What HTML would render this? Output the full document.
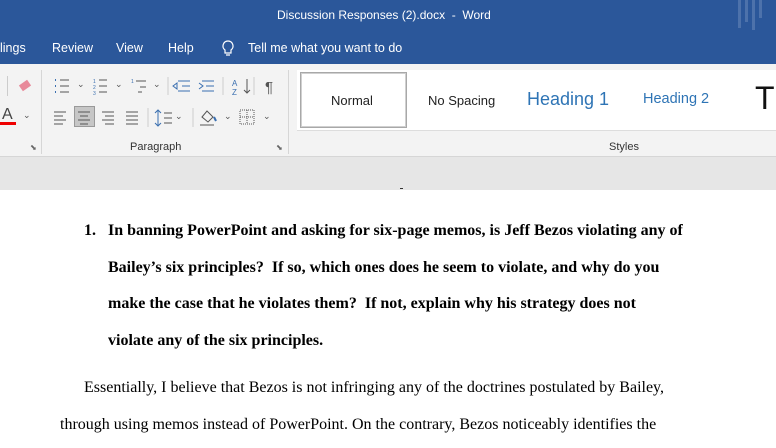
<!DOCTYPE html><html><head><style>
body{margin:0;width:776px;height:448px;overflow:hidden;position:relative;background:#fff;font-family:"Liberation Sans",sans-serif}
.a{position:absolute}
.t{white-space:nowrap}
.s{font-family:"Liberation Serif",serif;font-size:16px;color:#000;position:absolute;white-space:nowrap}
.b{font-weight:bold}
</style></head><body>
<div class="a" style="left:0;top:0;width:776px;height:64px;background:#2b579a"></div>
<div class="a t" style="left:277px;top:8px;color:#fff;font-size:12px">Discussion Responses (2).docx&nbsp; - &nbsp;Word</div>
<div class="a" style="left:738px;top:0;width:3px;height:28px;background:#4d72ab"></div>
<div class="a" style="left:745px;top:0;width:3px;height:22px;background:#4d72ab"></div>
<div class="a" style="left:752px;top:0;width:3px;height:30px;background:#4d72ab"></div>
<div class="a" style="left:759px;top:0;width:3px;height:18px;background:#4d72ab"></div>
<div class="a t" style="left:0;top:41px;color:#fff;font-size:12.5px">lings</div>
<div class="a t" style="left:52px;top:41px;color:#fff;font-size:12.5px">Review</div>
<div class="a t" style="left:116px;top:41px;color:#fff;font-size:12.5px">View</div>
<div class="a t" style="left:168px;top:41px;color:#fff;font-size:12.5px">Help</div>
<svg class="a" style="left:221px;top:40px" width="14" height="17"><path d="M7 1a5 5 0 0 0-3 9v3h6v-3a5 5 0 0 0-3-9zM5 15h4" stroke="#fff" fill="none" stroke-width="1.2"/></svg>
<div class="a t" style="left:248px;top:41px;color:#fff;font-size:12.5px">Tell me what you want to do</div>
<div class="a" style="left:0;top:64px;width:776px;height:93px;background:#f3f3f3"></div>
<div class="a" style="left:41px;top:70px;width:1px;height:84px;background:#d6d6d6"></div>
<div class="a" style="left:288px;top:70px;width:1px;height:84px;background:#d6d6d6"></div>
<div class="a" style="left:7px;top:76px;width:1px;height:20px;background:#ccc"></div>
<div class="a" style="left:20px;top:82px;width:10px;height:7px;background:#e88a9a;transform:rotate(-35deg)"></div>
<div class="a t" style="left:2px;top:106px;font-size:16px;color:#444">A</div>
<div class="a" style="left:0;top:122px;width:16px;height:3px;background:#e00"></div>
<div class="a t" style="left:23px;top:110px;font-size:9px;color:#555">⌄</div>
<svg class="a" style="left:52px;top:76px" width="240" height="20" stroke="#555" fill="none">
<path d="M3 4h1M3 10h1M3 16h1" stroke="#3a6fb0" stroke-width="2"/>
<path d="M8 4h9M8 10h9M8 16h9"/>
<path d="M47 4h8M47 10h8M47 16h8"/><text x="41" y="7" font-size="5" fill="#3a6fb0" stroke="none">1</text><text x="41" y="13" font-size="5" fill="#3a6fb0" stroke="none">2</text><text x="41" y="19" font-size="5" fill="#3a6fb0" stroke="none">3</text>
<path d="M84 5h10M88 11h6M86 16h4"/><text x="79" y="7" font-size="5" fill="#3a6fb0" stroke="none">1</text>
<path d="M116 1v18M171 1v18M202 1v18" stroke="#ccc"/>
<path d="M126 5h12M130 10h8M126 15h12M121 10l4-3v6z" stroke="#3a6fb0"/>
<path d="M150 5h12M154 10h8M150 15h12M147 7l4 3-4 3" stroke="#3a6fb0"/>
<path d="M195 3v14M192 14l3 3 3-3"/>
<text x="180" y="10" font-size="8" fill="#3a6fb0" stroke="none">A</text><text x="180" y="19" font-size="8" fill="#3a6fb0" stroke="none">Z</text>
<text x="213" y="16" font-size="15" fill="#555" stroke="none">¶</text>
</svg>
<div class="a t" style="left:77px;top:79px;font-size:9px;color:#555">⌄</div>
<div class="a t" style="left:115px;top:79px;font-size:9px;color:#555">⌄</div>
<div class="a t" style="left:153px;top:79px;font-size:9px;color:#555">⌄</div>
<div class="a" style="left:74px;top:106px;width:21px;height:21px;background:#c6c6c6;border:1px solid #999;box-sizing:border-box"></div>
<svg class="a" style="left:52px;top:108px" width="240" height="20" stroke="#555" fill="none">
<path d="M2 4h12M2 8h9M2 12h12M2 16h9"/>
<path d="M26 4h12M28 8h8M26 12h12M28 16h8"/>
<path d="M50 4h12M53 8h9M50 12h12M53 16h9"/>
<path d="M74 4h12M74 8h12M74 12h12M74 16h12"/>
<path d="M96 0v19M141 0v19" stroke="#ccc"/>
<path d="M106 2v16M103 5l3-3 3 3M103 15l3 3 3-3" stroke="#3a6fb0"/><path d="M112 5h8M112 10h8M112 15h8"/>
<path d="M150 9l5-6 6 6-5 5zM148 17h14" /><path d="M162 9l2 4" stroke="#3a6fb0" stroke-width="2"/>
<path d="M188 2h14v14h-14z" stroke-dasharray="1 1"/><path d="M195 2v14M188 9h14" stroke-dasharray="1 1"/>
</svg>
<div class="a t" style="left:175px;top:111px;font-size:9px;color:#555">⌄</div>
<div class="a t" style="left:224px;top:111px;font-size:9px;color:#555">⌄</div>
<div class="a t" style="left:263px;top:111px;font-size:9px;color:#555">⌄</div>
<div class="a t" style="left:130px;top:141px;font-size:11px;color:#333">Paragraph</div>
<div class="a t" style="left:30px;top:143px;font-size:8px;color:#666">⬊</div>
<div class="a t" style="left:276px;top:143px;font-size:8px;color:#666">⬊</div>
<div class="a" style="left:297px;top:70px;width:479px;height:60px;background:#fff;border-bottom:1px solid #ddd"></div>
<div class="a" style="left:300px;top:72px;width:107px;height:56px;border:1px solid #a8a8a8;box-shadow:inset 0 0 0 1px #d0d0d0;box-sizing:border-box"></div>
<div class="a t" style="left:331px;top:93px;font-size:13px;color:#222">Normal</div>
<div class="a t" style="left:428px;top:93px;font-size:13px;color:#222">No Spacing</div>
<div class="a t" style="left:527px;top:89px;font-size:18px;color:#2e74b5">Heading 1</div>
<div class="a t" style="left:643px;top:91px;font-size:14.5px;color:#2e74b5">Heading 2</div>
<div class="a t" style="left:755px;top:80px;font-size:32px;color:#111">T</div>
<div class="a t" style="left:609px;top:141px;font-size:11px;color:#333">Styles</div>
<div class="a" style="left:0;top:156px;width:776px;height:1px;background:#d6d6d6"></div>
<div class="a" style="left:0;top:157px;width:776px;height:33px;background:#e6e6e6"></div>
<div class="a" style="left:400px;top:188px;width:3px;height:1px;background:#333"></div>
<div class="s b" style="left:84px;top:222px">1.</div>
<div class="s b" style="left:108px;top:222px">In banning PowerPoint and asking for six-page memos, is Jeff Bezos violating any of</div>
<div class="s b" style="left:108px;top:259px">Bailey’s six principles?&nbsp; If so, which ones does he seem to violate, and why do you</div>
<div class="s b" style="left:108px;top:295px">make the case that he violates them?&nbsp; If not, explain why his strategy does not</div>
<div class="s b" style="left:108px;top:332px">violate any of the six principles.</div>
<div class="s" style="left:84px;top:379px">Essentially, I believe that Bezos is not infringing any of the doctrines postulated by Bailey,</div>
<div class="s" style="left:60px;top:416px">through using memos instead of PowerPoint. On the contrary, Bezos noticeably identifies the</div>
</body></html>
